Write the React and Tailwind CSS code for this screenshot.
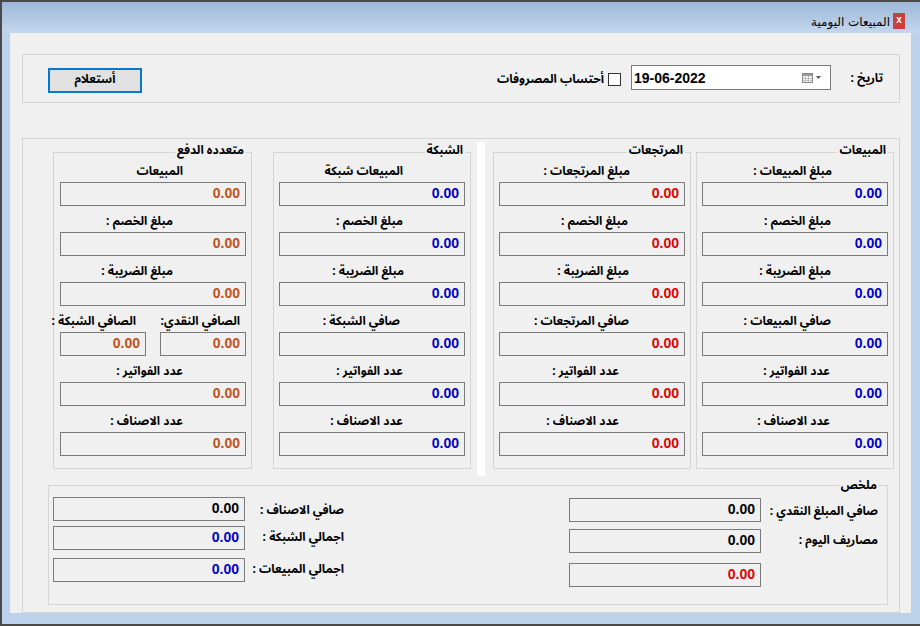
import React from "react";

const COLORS = {
  blue: "text-[#0000c8]",
  red: "text-[#e00000]",
  brown: "text-[#c0501a]",
  black: "text-black",
};

function Field({ color, className = "" }) {
  return (
    <div
      dir="ltr"
      className={`h-[24px] border border-[#7a7a7a] bg-[#f0f0f0] flex items-center justify-end pr-[5px] pb-[3px] ${className}`}
    >
      <span className={`font-['Liberation_Sans',sans-serif] text-[14px] font-bold leading-none ${COLORS[color]}`}>0.00</span>
    </div>
  );
}

function Label({ text, cls }) {
  return (
    <div className={`h-[26px] pt-[7px] leading-[18px] text-[12px] font-bold text-right whitespace-nowrap ${cls}`}>
      {text}
    </div>
  );
}

function ColBox({ title, items, color, className = "" }) {
  return (
    <div className={`relative w-[198px] h-[317px] mt-[10px] border border-[#d5d5d5] pt-[3px] px-[5px] ${className}`}>
      <span className="absolute top-[-10px] right-[5px] px-[2px] bg-[#f0f0f0] leading-[16px] text-[12px] font-bold whitespace-nowrap">
        {title}
      </span>
      {items.map((it, i) =>
        it.split ? (
          <div key={i}>
            <div className="flex gap-[14px]">
              <div className="w-[86px]">
                <Label text="الصافي النقدي:" cls="mr-[6px]" />
              </div>
              <div className="w-[86px]">
                <Label text="الصافي الشبكة :" cls="mr-[10px]" />
              </div>
            </div>
            <div className="flex gap-[14px]">
              <Field color={color} className="w-[86px]" />
              <Field color={color} className="w-[86px]" />
            </div>
          </div>
        ) : (
          <div key={i}>
            <Label text={it.label} cls={it.mr} />
            <Field color={color} className="w-[186px]" />
          </div>
        )
      )}
    </div>
  );
}

const salesItems = [
  { label: "مبلغ المبيعات :", mr: "mr-[56px]" },
  { label: "مبلغ الخصم :", mr: "mr-[57px]" },
  { label: "مبلغ الضريبة :", mr: "mr-[57px]" },
  { label: "صافي المبيعات :", mr: "mr-[57px]" },
  { label: "عدد الفواتير :", mr: "mr-[58px]" },
  { label: "عدد الاصناف :", mr: "mr-[58px]" },
];

const returnItems = [
  { label: "مبلغ المرتجعات :", mr: "mr-[55px]" },
  { label: "مبلغ الخصم :", mr: "mr-[57px]" },
  { label: "مبلغ الضريبة :", mr: "mr-[56px]" },
  { label: "صافي المرتجعات :", mr: "mr-[56px]" },
  { label: "عدد الفواتير :", mr: "mr-[66px]" },
  { label: "عدد الاصناف :", mr: "mr-[66px]" },
];

const netItems = [
  { label: "المبيعات شبكة", mr: "mr-[62px]" },
  { label: "مبلغ الخصم :", mr: "mr-[62px]" },
  { label: "مبلغ الضريبة :", mr: "mr-[61px]" },
  { label: "صافي الشبكة :", mr: "mr-[65px]" },
  { label: "عدد الفواتير :", mr: "mr-[62px]" },
  { label: "عدد الاصناف :", mr: "mr-[62px]" },
];

const multiItems = [
  { label: "المبيعات", mr: "mr-[63px]" },
  { label: "مبلغ الخصم :", mr: "mr-[73px]" },
  { label: "مبلغ الضريبة :", mr: "mr-[73px]" },
  { split: true },
  { label: "عدد الفواتير :", mr: "mr-[63px]" },
  { label: "عدد الاصناف :", mr: "mr-[63px]" },
];

function CalendarIcon() {
  return (
    <svg width="22" height="12" viewBox="0 0 22 12">
      <rect x="0.5" y="1.5" width="10" height="9" fill="#f4f4f4" stroke="#8a8a8a" />
      <rect x="1" y="2" width="9" height="2" fill="#9a9a9a" />
      <line x1="3.5" y1="4" x2="3.5" y2="10" stroke="#c0c0c0" />
      <line x1="6.5" y1="4" x2="6.5" y2="10" stroke="#c0c0c0" />
      <line x1="1" y1="6.5" x2="10" y2="6.5" stroke="#c0c0c0" />
      <line x1="1" y1="8.5" x2="10" y2="8.5" stroke="#c0c0c0" />
      <path d="M14 4 L19 4 L16.5 7 Z" fill="#555" />
    </svg>
  );
}

export default function App() {
  return (
    <div className="w-[920px] h-[626px] overflow-hidden bg-[#bcd2ea] border-l-2 border-t-2 border-b-2 border-[#4a4a4a] font-['Noto_Sans_Arabic','Noto_Naskh_Arabic','DejaVu_Sans',sans-serif] text-black flex flex-col">
      {/* title bar */}
      <div
        dir="rtl"
        className="h-[31px] shrink-0 bg-gradient-to-b from-[#9db8d8] to-[#c3d7ed] flex items-start pr-[15px] pt-[11px]"
      >
        <div className="w-[12px] h-[16px] bg-[#c9403f] flex items-center justify-center text-white text-[10px] font-bold leading-none pb-[2px] font-['Liberation_Sans',sans-serif]">
          x
        </div>
        <div className="mr-[3px] mt-[1px] text-[12px] leading-[16px] whitespace-nowrap font-['DejaVu_Sans',sans-serif]">المبيعات اليومية</div>
      </div>

      {/* content */}
      <div dir="rtl" className="ml-[8px] mr-[9px] h-[580px] shrink-0 bg-[#f0f0f0] flex flex-col items-start">
        {/* top group */}
        <div className="mt-[21px] mr-[11px] w-[878px] h-[49px] border border-[#d5d5d5] flex items-center pr-[16px]">
          <div className="w-[52px] text-right text-[12px] font-bold whitespace-nowrap">تاريخ :</div>
          <div
            dir="ltr"
            className="mb-[2px] w-[200px] h-[25px] bg-white border border-[#7a7a7a] flex items-center justify-between pl-[2px] pr-[6px]"
          >
            <span className="font-['Liberation_Sans',sans-serif] text-[14px] font-bold leading-none">19-06-2022</span>
            <CalendarIcon />
          </div>
          <div className="mt-[2px] mr-[10px] w-[13px] h-[13px] bg-white border border-[#333]" />
          <div className="mt-[2px] mr-[4px] text-[12px] font-bold whitespace-nowrap">أحتساب المصروفات</div>
          <div className="flex-1" />
          <div className="mt-[3px] ml-[25px] w-[94px] h-[25px] border-2 border-[#0078d7] bg-[#e1e1e1] flex items-center justify-center text-[12px] font-bold">
            أستعلام
          </div>
        </div>

        {/* main group */}
        <div className="mt-[35px] mr-[11px] w-[878px] h-[475px] border border-[#d5d5d5] flex flex-col items-start">
          <div className="flex items-start pr-[5px] pt-[3px]">
            <ColBox title="المبيعات" items={salesItems} color="blue" />
            <ColBox title="المرتجعات" items={returnItems} color="red" className="mr-[5px]" />
            <div className="mr-[8px] w-[8px] h-[334px] bg-white" />
            <ColBox title="الشبكة" items={netItems} color="blue" className="mr-[6px]" />
            <ColBox title="متعدده الدفع" items={multiItems} color="brown" className="mr-[21px] w-[199px]" />
          </div>

          {/* summary */}
          <div className="relative mt-[9px] mr-[11px] w-[840px] h-[120px] border border-[#d5d5d5] flex items-start pr-[9px]">
            <span className="absolute top-[-8px] right-[8px] px-[2px] bg-[#f0f0f0] leading-[16px] text-[12px] font-bold">
              ملخص
            </span>
            <div className="pt-[12px] flex flex-col">
              <div className="flex items-center">
                <div className="w-[117px] pt-[3px] text-right text-[12px] font-bold whitespace-nowrap">صافي المبلغ النقدي :</div>
                <Field color="black" className="w-[192px]" />
              </div>
              <div className="mt-[7px] flex items-center">
                <div className="w-[117px] text-right text-[12px] font-bold whitespace-nowrap">مصاريف اليوم :</div>
                <Field color="black" className="w-[192px]" />
              </div>
              <div className="mt-[10px] flex items-center">
                <div className="w-[117px]" />
                <Field color="red" className="w-[192px]" />
              </div>
            </div>
            <div className="mr-[225px] pt-[11px] flex flex-col">
              <div className="flex items-center">
                <div className="w-[99px] pt-[3px] text-right text-[12px] font-bold whitespace-nowrap">صافي الاصناف :</div>
                <Field color="black" className="w-[192px]" />
              </div>
              <div className="mt-[5px] flex items-center">
                <div className="w-[99px] text-right text-[12px] font-bold whitespace-nowrap">اجمالي الشبكة :</div>
                <Field color="blue" className="w-[192px]" />
              </div>
              <div className="mt-[8px] flex items-center">
                <div className="w-[99px] text-right text-[12px] font-bold whitespace-nowrap">اجمالي المبيعات :</div>
                <Field color="blue" className="w-[192px]" />
              </div>
            </div>
          </div>
        </div>
      </div>
    </div>
  );
}
